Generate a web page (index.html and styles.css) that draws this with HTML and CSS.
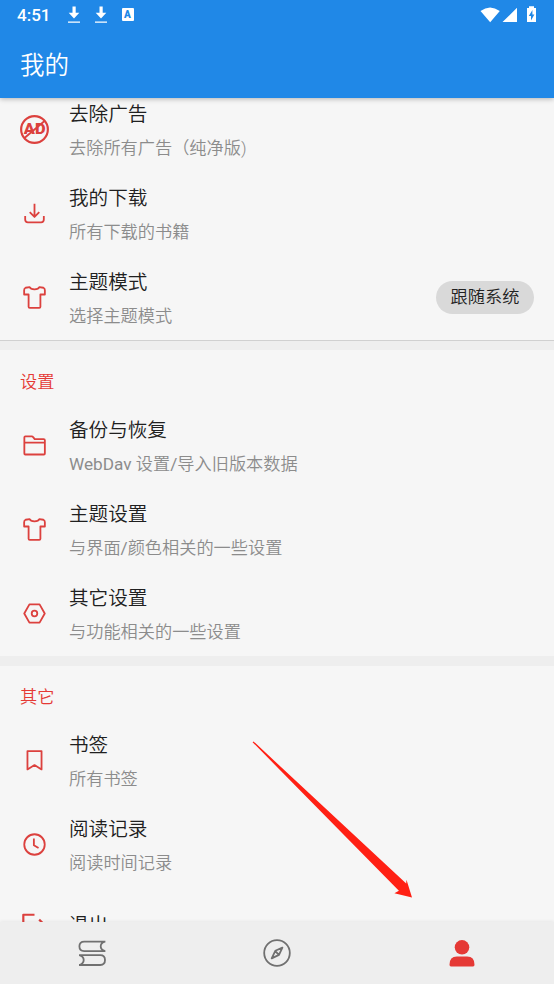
FILE: index.html
```html
<!DOCTYPE html>
<html lang="zh-CN">
<head>
<meta charset="utf-8">
<title>我的</title>
<link rel="stylesheet" href="styles.css">
</head>
<body>
<svg class="defs" aria-hidden="true">
  <symbol id="shirt" viewBox="0 0 28 28"><path d="M9.3 3.9C10.3 6.8 17.7 6.8 18.7 3.9L22.6 4.6Q24 5.2 24 7V11.1H19.7V23Q19.7 24.1 18.6 24.1H9.4Q8.3 24.1 8.3 23V11.1H4V7Q4 5.2 5.4 4.6Z"/></symbol>
  <symbol id="save" viewBox="0 0 16 20"><path d="M6.5 1.5h3.2v6.3h3.6L8 13.4 2.7 7.8h3.8zM2 16.4h12v1.4H2z"/></symbol>
</svg>
<div class="screen">
  <header class="top">
    <div class="status">
      <span class="time">4:51</span>
      <svg class="save first"><use href="#save"/></svg>
      <svg class="save"><use href="#save"/></svg>
      <span class="lang">A</span>
      <svg class="signals" viewBox="0 0 58 20"><path d="M.5 6Q10 -1.2 19.8 6L10.2 17.3zM22.5 17.1L37 2.8v14.3zM47 3h2V1.2h5V3h2v14h-9z"/><path class="bolt" d="M52.4 5l-3.6 6h2.2v4.5l3.4-6h-2z"/></svg>
    </div>
    <h1>我的</h1>
  </header>

  <main>
    <section class="group ruled">
      <div class="row">
        <svg class="icon" viewBox="0 0 28 28"><circle class="thick" cx="14" cy="14" r="12.9"/><text class="ad" x="14.2" y="18.6" text-anchor="middle" textLength="21" lengthAdjust="spacingAndGlyphs">AD</text><path d="M4.3 22.2L23.7 5.8"/></svg>
        <div class="copy"><h2>去除广告</h2><p>去除所有广告（纯净版)</p></div>
      </div>
      <div class="row">
        <svg class="icon" viewBox="0 0 28 28"><path d="M14 4.7v12.6M9.4 12.7l4.6 4.6 4.6-4.6M5 16.4v3.4Q5 22.5 7.7 22.5h12.6q2.7 0 2.7-2.7v-3.4"/></svg>
        <div class="copy"><h2>我的下载</h2><p>所有下载的书籍</p></div>
      </div>
      <div class="row">
        <svg class="icon"><use href="#shirt"/></svg>
        <div class="copy"><h2>主题模式</h2><p>选择主题模式</p></div>
        <span class="chip">跟随系统</span>
      </div>
    </section>

    <section class="group">
      <h3>设置</h3>
      <div class="row">
        <svg class="icon" viewBox="0 0 28 28"><path d="M4.2 21.8V6.2Q4.2 5.2 5.2 5.2h6.2q.8 0 1.3.7l1.5 1.9h8.6q1.2 0 1.2 1.2v12.8q0 .9-.9.9H5.1q-.9 0-.9-.9zM4.2 11.3H24"/></svg>
        <div class="copy"><h2>备份与恢复</h2><p><span class="latin">WebDav </span>设置<span class="latin">/</span>导入旧版本数据</p></div>
      </div>
      <div class="row">
        <svg class="icon"><use href="#shirt"/></svg>
        <div class="copy"><h2>主题设置</h2><p>与界面<span class="latin">/</span>颜色相关的一些设置</p></div>
      </div>
      <div class="row">
        <svg class="icon" viewBox="0 0 28 28"><path d="M9.1 5.2h9.8l5 8.8-5 8.8H9.1L4.1 14z"/><circle cx="14" cy="14" r="2.7"/></svg>
        <div class="copy"><h2>其它设置</h2><p>与功能相关的一些设置</p></div>
      </div>
    </section>

    <section class="group">
      <h3>其它</h3>
      <div class="row">
        <svg class="icon" viewBox="0 0 28 28"><path d="M7.2 4.9h13.6v17.7L14 18.4l-6.8 4.2z"/></svg>
        <div class="copy"><h2>书签</h2><p>所有书签</p></div>
      </div>
      <div class="row">
        <svg class="icon" viewBox="0 0 28 28"><circle cx="14" cy="14" r="9.9"/><path d="M13.4 8.3v6.4l4.5 2.7"/></svg>
        <div class="copy"><h2>阅读记录</h2><p>阅读时间记录</p></div>
      </div>
      <div class="row single">
        <svg class="icon" viewBox="0 0 28 28"><path class="thick" d="M14 4.6H3.2v18.8H14M18.5 9.3l4.8 4.7-4.8 4.7M10 14h13"/></svg>
        <div class="copy"><h2>退出</h2></div>
      </div>
    </section>
  </main>

  <nav>
    <a><svg class="tab" viewBox="0 0 30 30"><path d="M28.4 3.6H7.2Q2.4 3.6 2.4 8.3t4.8 4.9h21.2M28 3.6Q23.7 4.8 23.7 8.3t4.3 4.9M2 17.1h21.2Q28 17.1 28 22t-4.8 5H2M2.4 17.1q4.3 1.3 4.3 4.9T2.4 27"/></svg></a>
    <a><svg class="tab" viewBox="0 0 30 30"><circle cx="15" cy="15" r="12.8"/><path d="M20.4 9.6l-7.1 3.2-3.6 7.6 7.3-3.5zM13.1 13l3.9 3.9"/></svg></a>
    <a><svg class="tab active" viewBox="0 0 30 30"><circle cx="15" cy="8.9" r="7.8"/><path d="M1.6 27.6Q1.6 18.8 9.5 18.8h11q7.9 0 7.9 8.8 0 1.9-1.6 1.9H3.2q-1.6 0-1.6-1.9z"/></svg></a>
  </nav>
  <svg class="pointer" viewBox="0 0 162 160"><path d="M.6 1.2L1.5.4 154.2 142.6l.3-3.8L160 156.4l-17.6-4.2 4.5-2.4z"/></svg>
</div>
</body>
</html>
```
FILE: styles.css
```css
* { box-sizing: border-box; }

body {
  margin: 0;
  font-family: Roboto, "Noto Sans CJK SC", sans-serif;
}

h1, h2, h3, p { margin: 0; font-weight: 350; }

.defs { position: absolute; width: 0; height: 0; }

.screen {
  position: relative;
  display: flex;
  flex-direction: column;
  height: 984px;
  overflow: hidden;
  background: #f6f6f6;
}

.top {
  flex: none;
  height: 98px;
  background: #2088e7;
  color: #fff;
  box-shadow: 0 1px 5px rgba(0, 0, 0, .28);
  z-index: 1;
}

.status {
  display: flex;
  align-items: center;
  height: 30px;
  padding: 0 16px 0 17px;
}

.time { width: 33px; font-size: 17px; font-weight: 500; line-height: 30px; }

.save { width: 16px; height: 20px; margin-left: 11px; margin-bottom: 1px; fill: #fff; }
.save.first { margin-left: 15.5px; }

.lang {
  width: 12px;
  height: 13px;
  margin-left: 13px;
  margin-bottom: 1px;
  border-radius: 1px;
  background: #fff;
  color: #2088e7;
  font-size: 10px;
  font-weight: 900;
  line-height: 13px;
  text-align: center;
}

.signals { width: 58px; height: 20px; margin-left: auto; fill: #fff; }
.signals .bolt { fill: #2088e7; }

h1 { padding-left: 20px; font-size: 24.5px; line-height: 71px; }

main { flex: 1; min-height: 0; overflow: hidden; }

.group { border-bottom: 10px solid #eee; }
.group:first-child { margin-top: -10px; }
.ruled .row:last-child { height: 83.2px; box-shadow: 0 1px 0 #d0d0d0; }
.ruled + .group h3 { height: 54px; padding-top: 6px; }

h3 {
  height: 53px;
  padding: 5px 20px 0;
  color: #e53935;
  font-size: 17.2px;
  line-height: 53px;
}

.row {
  display: flex;
  align-items: center;
  height: 84.2px;
  padding: 0 20px;
}
.row.single { height: 74px; }

.icon {
  flex: none;
  width: 29px;
  height: 29px;
  margin: 0 20px 1px 0;
  fill: none;
  stroke: #dc413e;
  stroke-width: 1.75;
  stroke-linejoin: round;
}
.icon .thick { stroke-width: 2.1; }
.ad { fill: #dc413e; stroke: none; font-size: 13.5px; font-weight: 900; }

.copy { flex: 1; padding-top: 1px; }

h2 { color: #202020; font-size: 19.6px; line-height: 29px; }
p { margin-top: 6px; color: #8c8c8c; font-size: 17.2px; line-height: 26px; white-space: nowrap; }
.latin { font-weight: 400; }

.chip {
  width: 98px;
  margin-bottom: 1px;
  border-radius: 17px;
  background: #d9d9d9;
  color: #222;
  font-size: 17.2px;
  font-weight: 350;
  line-height: 33px;
  text-align: center;
}

nav {
  display: grid;
  grid-template-columns: repeat(3, 1fr);
  flex: none;
  height: 62px;
  background: #eee;
  box-shadow: 0 -1px 3px rgba(0, 0, 0, .06);
  z-index: 1;
}
nav a { display: flex; align-items: center; justify-content: center; }

.tab { width: 30px; height: 30px; fill: none; stroke: #707070; stroke-width: 1.8; stroke-linejoin: round; }
.tab.active { width: 28px; height: 28px; fill: #e53935; stroke: none; }

.pointer {
  position: absolute;
  left: 252px;
  top: 741px;
  width: 162px;
  height: 160px;
  fill: #ff2014;
  z-index: 2;
}
```
